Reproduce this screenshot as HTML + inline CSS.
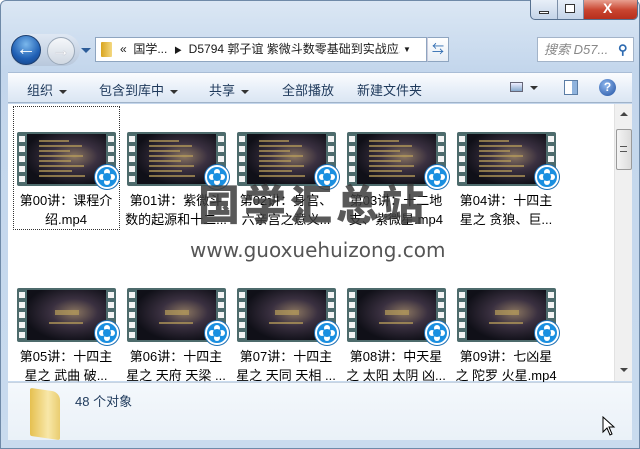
<!DOCTYPE html><html><head><meta charset="utf-8"><style>
*{margin:0;padding:0;box-sizing:border-box}
body{width:640px;height:449px;overflow:hidden;position:relative;font-family:"Liberation Sans","Noto Sans CJK SC",sans-serif;background:#fff}
.frame{position:absolute;left:0;top:0;width:640px;height:449px;background:linear-gradient(#dbe7f4,#c3d6ec 70px,#c9dbee);border:1px solid #6f8aa8;border-radius:6px 6px 0 0}
.ab{position:absolute}
.tb{position:absolute;left:8px;top:72px;width:624px;height:31px;background:linear-gradient(#fbfcfe,#e6eef8 60%,#dbe6f3);border-top:1px solid #a9bdd6;border-bottom:1px solid #a0b3c9;font-size:13px;color:#1e395b}
.tb span{position:absolute;top:7px}
.tri{display:inline-block;width:0;height:0;border-left:4px solid transparent;border-right:4px solid transparent;border-top:4px solid #333;vertical-align:middle;margin-left:6px}
.content{position:absolute;left:8px;top:104px;width:606px;height:277px;background:#fff;overflow:hidden}
.item{position:absolute;width:104px;text-align:center;font-size:13px;line-height:19px;color:#000;white-space:nowrap}
.th{position:absolute;width:99px;height:54px;background:#4d6b6c;border-radius:2px}
.th .img{position:absolute;left:10px;top:2px;width:79px;height:50px;background:radial-gradient(ellipse at 60% 45%,#8a7560,#3a3040 35%,#101018 75%)}
.th .img b{position:absolute;left:12px;height:2px;background:#b89c5a;opacity:.7}
.th i{position:absolute;width:6px;height:6px;background:#f4f4f4}
.bd{position:absolute;right:-3px;bottom:-3px;width:24px;height:24px;border-radius:50%;background:#1a8fe0;border:2px solid #fff;box-shadow:0 0 0 1px #1b6fb5}
.bd::after{content:"";position:absolute;left:6px;top:6px;width:8px;height:8px;border-radius:50%;background:#1a8fe0;box-shadow:0 -5px 0 -1px #fff,0 5px 0 -1px #fff,5px 0 0 -1px #fff,-5px 0 0 -1px #fff}
.status{position:absolute;left:8px;top:382px;width:624px;height:58px;background:linear-gradient(#f4f8fc,#eaf1f8);border-top:1px solid #c7d3e1}
</style></head><body>
<div class="frame"></div>
<div class="ab" style="left:530px;top:0;width:108px;height:20px;border:1px solid #56708f;border-top:none;border-radius:0 0 5px 5px;background:linear-gradient(#e8eff8,#c4d4e8);overflow:hidden">
<div class="ab" style="left:26px;top:0;width:1px;height:20px;background:#7c8fa8"></div>
<div class="ab" style="left:52px;top:0;width:1px;height:20px;background:#7c8fa8"></div>
<div class="ab" style="left:53px;top:0;width:55px;height:20px;background:linear-gradient(#e8a090,#c94530 50%,#b52c1a)"></div>
<div class="ab" style="left:8px;top:11px;width:10px;height:3px;border:1px solid #333;background:#fff"></div>
<div class="ab" style="left:34px;top:4px;width:10px;height:9px;border:1px solid #333;background:#fff"></div>
<div class="ab" style="left:72px;top:0px;color:#fff;font-weight:bold;font-size:14px">X</div>
</div>
<div class="ab" style="left:10px;top:34px;width:70px;height:32px;border-radius:16px;background:linear-gradient(#dfe8f3,#b8c8dc)"></div>
<div class="ab" style="left:11px;top:35px;width:30px;height:30px;border-radius:50%;background:radial-gradient(circle at 50% 30%,#7bb8ec,#1f5fb4 60%,#163f80);border:1px solid #1d3f70;color:#fff;font-size:20px;line-height:27px;text-align:center;font-weight:bold">&#8592;</div>
<div class="ab" style="left:47px;top:37px;width:28px;height:28px;border-radius:50%;background:linear-gradient(#f5f7fa,#d0d8e2);border:1px solid #9aa8b8;color:#fff;font-size:18px;line-height:25px;text-align:center;text-shadow:0 0 1px #889">&#8594;</div>
<div class="ab" style="left:81px;top:48px;border-left:5px solid transparent;border-right:5px solid transparent;border-top:5px solid #2d5d99"></div>
<div class="ab" style="left:95px;top:37px;width:332px;height:25px;background:#fff;border:1px solid #8ea5c0;font-size:12px;line-height:23px;color:#1a1a1a;overflow:hidden;white-space:nowrap">
<div class="ab" style="left:5px;top:4px;width:11px;height:15px;background:linear-gradient(90deg,#d9a520,#f4d880);border-radius:1px"></div>
<span class="ab" style="left:24px;width:280px;overflow:hidden">«&nbsp; 国学... &nbsp;<span style="font-size:8px">▶</span>&nbsp; D5794 郭子谊 紫微斗数零基础到实战应...</span>
<span class="ab" style="left:307px;font-size:8px">▼</span>
</div>
<div class="ab" style="left:427px;top:37px;width:22px;height:25px;background:linear-gradient(#fff,#e6edf5);border:1px solid #8ea5c0;border-left:1px solid #ccd;color:#2d6ab0;font-size:12px;line-height:23px;text-align:center">⇆</div>
<div class="ab" style="left:537px;top:37px;width:97px;height:25px;background:#fff;border:1px solid #a3b4c9;font-size:13px;font-style:italic;color:#888;line-height:23px;padding-left:6px;white-space:nowrap">搜索 D57...<span class="ab" style="left:80px;top:0;color:#2d6ab0;font-style:normal;font-weight:bold">⚲</span></div>
<div class="tb">
<span style="left:19px">组织<i class="tri"></i></span>
<span style="left:91px">包含到库中<i class="tri"></i></span>
<span style="left:201px">共享<i class="tri"></i></span>
<span style="left:274px">全部播放</span>
<span style="left:349px">新建文件夹</span>
<span style="left:502px;top:9px;width:13px;height:10px;border:1px solid #667;background:linear-gradient(#eef,#8ac)"></span>
<span style="left:522px;top:6px"><i class="tri" style="margin:0"></i></span>
<span style="left:556px;top:7px;width:14px;height:15px;border:1px solid #5b7da5;background:linear-gradient(90deg,#fff 60%,#8fb3dd 60%)"></span>
<span style="left:591px;top:6px;width:17px;height:17px;border-radius:50%;background:radial-gradient(circle at 40% 35%,#8fb8ef,#1f4fa0);color:#fff;font-size:12px;line-height:17px;text-align:center;font-weight:bold">?</span>
</div>
<div class="content">
<div class="ab" style="left:5px;top:2px;width:107px;height:124px;border:1px dotted #333"></div>
</div>
<div class="ab" style="left:614px;top:104px;width:18px;height:277px;background:#f0f0f0;border-left:1px solid #e2e2e2">
<div class="ab" style="left:5px;top:8px;border-left:4px solid transparent;border-right:4px solid transparent;border-bottom:4px solid #444"></div>
<div class="ab" style="left:1px;top:25px;width:16px;height:41px;border:1px solid #9a9a9a;border-radius:2px;background:linear-gradient(90deg,#f4f4f4,#dcdcdc)"></div>
<div class="ab" style="left:5px;top:42px;width:7px;height:6px;border-top:1px solid #555;border-bottom:1px solid #555"></div>
<div class="ab" style="left:5px;top:264px;border-left:4px solid transparent;border-right:4px solid transparent;border-top:4px solid #444"></div>
</div>
<div id="items"></div>
<div class="status">
<div class="ab" style="left:22px;top:7px;width:30px;height:48px;background:linear-gradient(90deg,#e5c050,#f8e7a8 60%,#e9cd70);border-radius:2px 8px 2px 2px;transform:skewY(8deg)"></div>
<div class="ab" style="left:67px;top:8px;font-size:13px;color:#1e395b">48 个对象</div>
</div>
<svg class="ab" style="left:602px;top:416px" width="14" height="20" viewBox="0 0 14 20"><path d="M1 1 L1 16 L5 12 L8 19 L10 18 L7 11 L12 11 Z" fill="#fff" stroke="#000" stroke-width="1"/></svg>
<div class="ab" style="left:198px;top:178px;font-size:42px;font-weight:900;color:rgba(60,60,60,0.85);letter-spacing:4px;font-family:'Noto Sans CJK SC',sans-serif;line-height:50px;white-space:nowrap">国学汇总站</div>
<div class="ab" style="left:190px;top:238px;font-size:20px;color:#555;font-family:'DejaVu Sans',sans-serif;white-space:nowrap">www.guoxuehuizong.com</div>
<script>
var L=[["第00讲：课程介","绍.mp4"],["第01讲：紫微斗","数的起源和十二..."],["第02讲：身宫、","六亲宫之意义..."],["第03讲：十二地","支、紫微星.mp4"],["第04讲：十四主","星之 贪狼、巨..."],["第05讲：十四主","星之 武曲 破..."],["第06讲：十四主","星之 天府 天梁 ..."],["第07讲：十四主","星之 天同 天相 ..."],["第08讲：中天星","之 太阳 太阴 凶..."],["第09讲：七凶星","之 陀罗 火星.mp4"]];
var h="";
for(var k=0;k<10;k++){var c=k%5,r=Math.floor(k/5);var x=17+110*c,y=132+156*r;
var holes="";for(var j=0;j<5;j++){holes+='<i style="left:2px;top:'+(4+j*10)+'px"></i><i style="right:2px;top:'+(4+j*10)+'px"></i>';}
var lines="";if(r==0){for(var j=0;j<8;j++)lines+='<b style="top:'+(6+j*5)+'px;width:'+(30+(j*13)%25)+'px"></b>';}else{lines='<b style="top:20px;left:28px;width:24px;height:5px"></b><b style="top:32px;left:22px;width:34px"></b>';}
h+='<div class="th" style="left:'+x+'px;top:'+y+'px">'+holes+'<div class="img">'+lines+'</div><div class="bd"></div></div>';
h+='<div class="item" style="left:'+(x-3)+'px;top:'+(y+59)+'px">'+L[k][0]+'<br>'+L[k][1]+'</div>';}
document.getElementById("items").innerHTML=h;
</script>
</body></html>
